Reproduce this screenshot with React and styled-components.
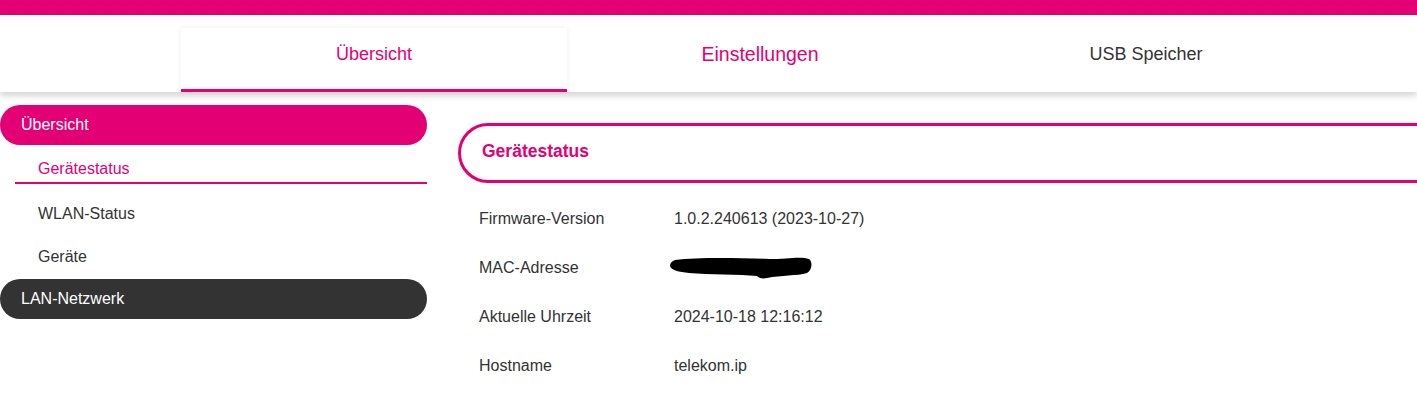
import React from "react";
import styled, { createGlobalStyle } from "styled-components";

const magenta = "#e20074";

const Global = createGlobalStyle`
  html, body {
    margin: 0;
    padding: 0;
    background: #fff;
    overflow: hidden;
    font-family: "Liberation Sans", Arial, sans-serif;
    color: #333;
  }
`;

const TopBar = styled.div`
  height: 15px;
  background: ${magenta};
`;

const Header = styled.div`
  height: 77px;
  background: #fff;
  display: flex;
  padding-left: 181px;
  box-shadow: 0 4px 6px rgba(0, 0, 0, 0.16);
  position: relative;
  z-index: 1;
`;

const Tab = styled.div`
  position: relative;
  width: 386px;
  display: flex;
  align-items: center;
  justify-content: center;
  padding-top: 2px;
  font-size: ${(p) => (p.$hover ? "19.5px" : "18px")};
  color: ${(p) => (p.$active || p.$hover ? magenta : "#333")};
  cursor: pointer;
  &::before {
    content: "";
    display: ${(p) => (p.$active ? "block" : "none")};
    position: absolute;
    left: 0;
    right: 0;
    top: 13px;
    bottom: 0;
    box-shadow: 0 0 5px rgba(0, 0, 0, 0.07);
    border-bottom: 3px solid ${magenta};
  }
  span {
    position: relative;
  }
`;

const Body = styled.div`
  display: flex;
  align-items: flex-start;
`;

const Sidebar = styled.nav`
  width: 427px;
  flex-shrink: 0;
  padding-top: 13px;
`;

const Group = styled.div`
  height: 40px;
  border-radius: 20px;
  background: ${(p) => (p.$active ? magenta : "#333")};
  color: #fff;
  font-size: 16px;
  display: flex;
  align-items: center;
  padding-left: 21px;
  margin-top: ${(p) => p.$mt || 0}px;
`;

const SubList = styled.div`
  display: flex;
  flex-direction: column;
`;

const SubItem = styled.div`
  font-size: 16px;
  line-height: 19px;
  color: ${(p) => (p.$active ? magenta : "#333")};
  margin-left: 15px;
  padding-left: 23px;
  ${(p) =>
    p.$active
      ? `padding-top: 14px; padding-bottom: 4px; border-bottom: 2px solid ${magenta}; margin-bottom: 8px;`
      : `padding-top: 12px; padding-bottom: 12px;`}
`;

const Content = styled.main`
  flex: 1;
  margin-left: 31px;
  margin-right: -60px;
  padding-top: 31px;
`;

const CardHead = styled.div`
  box-sizing: border-box;
  height: 60px;
  border: 3px solid ${magenta};
  border-radius: 30px;
  display: flex;
  align-items: center;
  padding-left: 21px;
  padding-bottom: 3px;
  font-size: 17.5px;
  font-weight: bold;
  color: ${magenta};
`;

const Table = styled.div`
  margin-top: 11px;
  padding-left: 21px;
  display: grid;
  grid-template-columns: 195px 1fr;
  grid-auto-rows: 49px;
  align-items: center;
  font-size: 16px;
  color: #333;
`;

const Label = styled.div``;
const Value = styled.div`
  display: flex;
  align-items: center;
`;

const Redacted = () => (
  <svg width="145" height="24" viewBox="0 0 145 24" style={{ marginLeft: -5 }}>
    <path
      d="M6 4 C30 1 70 2 100 3 C118 3 132 0 140 3 C144 6 143 14 138 17 C128 20 112 19 98 22 C93 23 90 22 88 20 C70 18 40 19 20 17 C10 16 2 14 1 10 C1 7 3 5 6 4 Z"
      fill="#000"
    />
  </svg>
);

const rows = [
  ["Firmware-Version", "1.0.2.240613 (2023-10-27)"],
  ["MAC-Adresse", null],
  ["Aktuelle Uhrzeit", "2024-10-18 12:16:12"],
  ["Hostname", "telekom.ip"],
];

export default function App() {
  return (
    <>
      <Global />
      <TopBar />
      <Header>
        <Tab $active>
          <span>Übersicht</span>
        </Tab>
        <Tab $hover>
          <span>Einstellungen</span>
        </Tab>
        <Tab>
          <span>USB Speicher</span>
        </Tab>
      </Header>
      <Body>
        <Sidebar>
          <Group $active>Übersicht</Group>
          <SubList>
            <SubItem $active>Gerätestatus</SubItem>
            <SubItem>WLAN-Status</SubItem>
            <SubItem>Geräte</SubItem>
          </SubList>
          <Group $mt={1}>LAN-Netzwerk</Group>
        </Sidebar>
        <Content>
          <CardHead>Gerätestatus</CardHead>
          <Table>
            {rows.map(([k, v]) => (
              <React.Fragment key={k}>
                <Label>{k}</Label>
                <Value>{v === null ? <Redacted /> : v}</Value>
              </React.Fragment>
            ))}
          </Table>
        </Content>
      </Body>
    </>
  );
}
